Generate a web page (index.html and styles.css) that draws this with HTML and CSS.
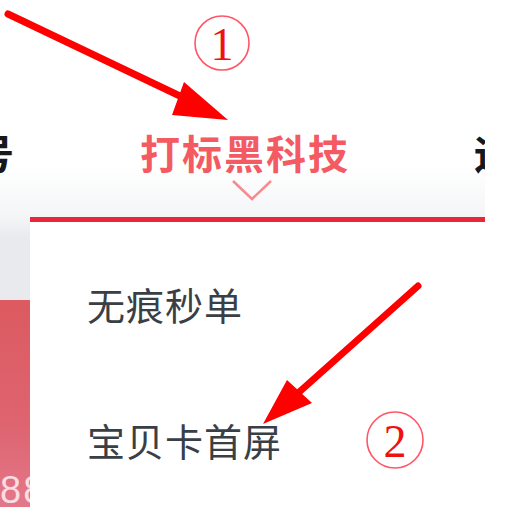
FILE: index.html
```html
<!DOCTYPE html>
<html lang="zh-CN">
<head>
    <meta charset="UTF-8">
    <title>打标黑科技</title>
    <meta name="viewport" content="width=device-width,initial-scale=1.0">
    <link rel="stylesheet" href="styles.css">
</head>
<body>
<div class="page">
    <div class="tabs">
        <div class="tab">账号</div>
        <div class="tab active">
            <span>打标黑科技</span>
            <svg class="chevron" width="42" height="22" viewBox="0 0 42 22">
                <polyline points="2,2 21,20 40,2" fill="none" stroke="#f7898f" stroke-width="2.5"/>
            </svg>
        </div>
        <div class="tab">运营</div>
    </div>
    <div class="main">
        <div class="side">
            <div class="sideTop"></div>
            <div class="sideGray"></div>
            <div class="banner"><span>88</span></div>
        </div>
        <div class="dropDown">
            <div class="item">无痕秒单</div>
            <div class="item">宝贝卡首屏</div>
        </div>
    </div>
</div>
<!-- 标注：箭头和序号 -->
<svg class="marks" width="524" height="520" viewBox="0 0 524 520">
    <line x1="8" y1="14" x2="182" y2="97" stroke="#ff0000" stroke-width="7" stroke-linecap="round"/>
    <polygon points="184,82 172,115 228,120" fill="#ff0000"/>
    <circle cx="222" cy="43" r="27" fill="none" stroke="#ff5566" stroke-width="1.6"/>
    <text x="222" y="60" class="num">1</text>

    <line x1="418" y1="286" x2="297" y2="394" stroke="#ff0000" stroke-width="7" stroke-linecap="round"/>
    <polygon points="287,380 312,403 263,424" fill="#ff0000"/>
    <circle cx="395" cy="440" r="28" fill="none" stroke="#ff5566" stroke-width="1.6"/>
    <text x="395" y="457" class="num">2</text>
</svg>
</body>
</html>
```

FILE: styles.css
```css
* {
    margin: 0;
    padding: 0;
}

body {
    background: #fff;
    font-family: "Noto Sans CJK SC", "Noto Sans", sans-serif;
    position: relative;
    width: 524px;
    height: 520px;
    overflow: hidden;
}

.page {width: 485px;overflow: hidden;}

.tabs {
    display: flex;
    gap: 124px;
    margin-left: -68px;
    height: 217px;
    padding-top: 131px;
    box-sizing: border-box;
    background: linear-gradient(to bottom, #fff 165px, #f4f5f7 217px);
}

.tab {
    font-size: 40px;
    line-height: 42px;
    letter-spacing: 2px;
    font-weight: 700;
    color: #16181c;
    white-space: nowrap;
    flex-shrink: 0;
}

.tab.active {
    color: #f45a62;
    display: flex;
    flex-direction: column;
    align-items: center;
}

.tab .chevron {display: block;margin: 6px 0 0 14px;}

.main {display: flex;height: 290px;}

.side {width: 30px;display: flex;flex-direction: column;flex-shrink: 0;}

.sideTop {height: 21px;background: linear-gradient(to bottom, #f4f5f7, #e9eaed);}

.sideGray {height: 62px;background: #e9eaed;}

.banner {
    flex: 1;
    background: linear-gradient(to bottom, #dc5a60, #de6470 60%, #e3788a);
    display: flex;
    align-items: flex-end;
    overflow: hidden;
    color: rgba(255, 240, 244, .85);
    font-family: "Liberation Sans", sans-serif;
    font-size: 38px;
    line-height: 34px;
    letter-spacing: 2px;
}

.dropDown {
    flex: 1;
    background: #fff;
    border-top: 5px solid #e8283a;
    padding: 63px 0 0 57px;
    display: flex;
    flex-direction: column;
    gap: 98px;
}

.dropDown .item {font-size: 38px;line-height: 38px;color: #3a3f46;letter-spacing: 1px;}

.marks {position: absolute;top: 0;left: 0;pointer-events: none;}

.marks .num {font-family: "Liberation Serif", serif;font-size: 46px;fill: #ee1111;text-anchor: middle;}
```
